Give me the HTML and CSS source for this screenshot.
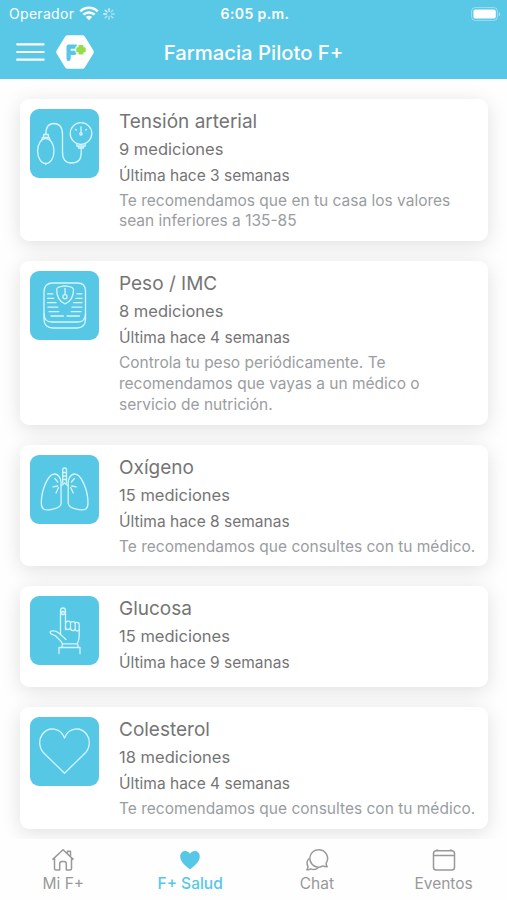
FILE: index.html
```html
<!DOCTYPE html>
<html lang="es">
<head>
    <meta charset="UTF-8">
    <meta name="viewport" content="width=device-width, initial-scale=1.0">
    <title>Farmacia Piloto F+</title>
    <link rel="stylesheet" href="styles.css">
</head>
<body>
<header>
    <div class="status">
        <div class="carrier">
            <span>Operador</span>
            <svg class="wifi" width="20" height="15" viewBox="0 0 20 15" fill="none" stroke="#fff" stroke-width="2.5">
                <path d="M1.3 5.4a12.4 12.4 0 0 1 17.4 0M4.4 8.7a8 8 0 0 1 11.2 0"/>
                <path d="M10 14.2L6.8 11a4.6 4.6 0 0 1 6.4 0z" fill="#fff" stroke="none"/>
            </svg>
            <svg class="spinner" width="12" height="12" viewBox="0 0 12 12" stroke="#fff" stroke-width="1.3" stroke-linecap="round">
                <path d="M6 .7v2.6M2.2 2.2l1.9 1.9M.7 6h2.6" opacity=".85"/>
                <path d="M2.2 9.8l1.9-1.9M6 11.3V8.7M9.8 9.8L7.9 7.9" opacity=".6"/>
                <path d="M11.3 6H8.7M9.8 2.2L7.9 4.1" opacity=".45"/>
            </svg>
        </div>
        <div class="time">6:05 p.m.</div>
        <svg class="battery" width="30" height="14" viewBox="0 0 30 14">
            <rect x=".6" y=".6" width="25.8" height="12.8" rx="3.6" fill="none" stroke="#fff" stroke-opacity=".4"/>
            <rect x="2.4" y="2.4" width="22.4" height="9.2" rx="2.2" fill="#fff"/>
            <path d="M27.8 5v4.4c1.6-.6 1.6-3.8 0-4.4z" fill="#fff" fill-opacity=".5"/>
        </svg>
    </div>
    <div class="navbar">
        <div class="left">
            <svg width="29" height="18" viewBox="0 0 29 18" stroke="#fff" stroke-width="2.2" stroke-linecap="round">
                <path d="M1.2 1.3h26.4M1.2 9h26.4M1.2 16.7h26.4"/>
            </svg>
            <svg class="logo" width="38" height="34" viewBox="0 0 38 34">
                <path d="M11.6.2h14.8q1.6 0 2.4 1.4l8.6 14q.7 1.4 0 2.8l-8.6 14q-.8 1.4-2.4 1.4H11.6q-1.6 0-2.4-1.4L.6 18.4q-.7-1.4 0-2.8l8.6-14Q10 .2 11.6.2z" fill="#fff"/>
                <path d="M12.6 23.9V11.6h7M12.6 17.8h6" fill="none" stroke="#56c8e6" stroke-width="4.2" stroke-linecap="round" stroke-linejoin="round"/>
                <path d="M23.3 11.1h3.400v2h2v3.400h-2v2h-3.400v-2h-2v-3.400h2z" fill="#93dd4b" stroke="#fff" stroke-width="4" stroke-linejoin="round"/>
                <path d="M23.400 11h3.200v2.200h2.200v3.200h-2.200v2.200h-3.200v-2.200h-2.200v-3.200h2.200z" fill="#93dd4b" stroke="#93dd4b" stroke-width="1.8" stroke-linejoin="round"/>
            </svg>
        </div>
        <h1>Farmacia Piloto F+</h1>
    </div>
</header>

<main>
    <section class="card">
        <svg class="icon" viewBox="0 0 69 69">
            <ellipse cx="15.8" cy="42" rx="8.2" ry="12.5"/>
            <path d="M11.4 31.500l1-3h6.800l1 3M13.700 28.500v-3h4.600v3M15.800 25.500C15.800 18 19 14.500 23.700 14.500c6.300 0 8.800 4.500 8.800 11V43c0 8 3.500 11 9 11 7 0 9.700-3.500 9.700-10v-6M15.800 54.500v1"/>
            <circle cx="51" cy="24.500" r="10.800"/>
            <path d="M46.800 34.500v2.500h8.400v-2.500M48.500 37v2h5v-2M51 18v5M45.500 20.500l.8.6M56.500 20.500l-.8.6"/>
            <circle cx="51" cy="24.800" r="1.200"/>
        </svg>
        <div class="info">
            <h2>Tensión arterial</h2>
            <p class="count">9 mediciones</p>
            <p class="last">Última hace 3 semanas</p>
            <p class="tip">Te recomendamos que en tu casa los valores<br>sean inferiores a 135-85</p>
        </div>
    </section>

    <section class="card">
        <svg class="icon" viewBox="0 0 69 69">
            <path d="M23 12h24.500q8 0 8 8v23q0 8-8 8H22q-8 0-8-8V21q0-9 9-9z"/>
            <path d="M14 43v5q0 9 9 9h24q8.500 0 8.500-9v-5"/>
            <path d="M28 16.500q6.800-3 14 0 1.500.8 1.500 2.200c0 7-2.600 11.700-8.500 14.300-5.600-2.600-8.300-7.300-8.300-14.300 0-1.400.3-1.800 1.300-2.200z"/>
            <path d="M35 17.500v6"/>
            <circle cx="35" cy="25.700" r="2.100"/>
            <path d="M17.500 22.800h5.300M17.500 27.300h6.200M17.500 31.700h8.500M18 36.200h9.800M19 40.600h9.800M21 45h12.500M52 22.800h-5.200M52 27.300h-6.200M52 31.700h-8.300M51.800 36.200h-9.800M51 40.600h-9.800M49.500 45H37"/>
        </svg>
        <div class="info">
            <h2>Peso / IMC</h2>
            <p class="count">8 mediciones</p>
            <p class="last">Última hace 4 semanas</p>
            <p class="tip">Controla tu peso periódicamente. Te<br>recomendamos que vayas a un médico o<br>servicio de nutrición.</p>
        </div>
    </section>

    <section class="card">
        <svg class="icon" viewBox="0 0 69 69">
            <path d="M32.700 28V14.500q0-1.500 1.900-1.500t1.900 1.500V28M32.700 17.500h3.800M32.700 21h3.800M32.700 24.500h3.800"/>
            <path d="M31 28.500c.5-4.500-2.500-9.500-6.500-9.500C18 19 11.300 35 11.300 48c0 6 2.700 7.700 9.200 6.700 5.500-.9 10.700-2.700 10.700-6.700z"/>
            <path d="M38.200 28.500c-.5-4.500 2.500-9.500 6.500-9.500C51.200 19 58 35 58 48c0 6-2.700 7.700-9.200 6.700-5.500-.9-10.600-2.700-10.600-6.700z"/>
            <path d="M31.500 30.500l3.100-2.500 3.100 2.500M28.500 32.500l-2.500 5.500M27.500 31l-4.500.8M27.800 27l-3-3.500M40.700 32.500l2.500 5.500M41.700 31l4.500.8M41.400 27l3-3.500"/>
        </svg>
        <div class="info">
            <h2>Oxígeno</h2>
            <p class="count">15 mediciones</p>
            <p class="last">Última hace 8 semanas</p>
            <p class="tip">Te recomendamos que consultes con tu médico.</p>
        </div>
    </section>

    <section class="card">
        <svg class="icon" viewBox="0 0 69 69">
            <path d="M30.500 38.500V14.700q0-2.700 2.500-2.700t2.500 2.700v19"/>
            <path d="M31.800 18.500v-3h2.400v3z"/>
            <path d="M35.500 28q0-2.800 2.500-2.800t2.500 1.500q0-1 2.200-1t2.300 1.300q.3-.8 2-.6 2.200.1 2.200 2v11.500q0 4.500-2 8H32.500c-1.500-4-4.500-5-6.700-7.900-1.800-1.400-5.600-1.500-5.600-3.600 0-2.300 5.500-2 8.300.3 3 2.300 5.500 5.200 7.500 6.800"/>
            <path d="M35.500 31q0 2.500 2.500 2.500t2.500-2v-5M40.500 32q.2 2.600 2.400 2.600t2.300-2.200v-5.200M45.200 33q.2 2 2 2t2-1.500"/>
            <path d="M32.500 47.900l-.7 3.600h16.500l-.7-3.600M29 57.500v-6h21v6"/>
        </svg>
        <div class="info">
            <h2>Glucosa</h2>
            <p class="count">15 mediciones</p>
            <p class="last">Última hace 9 semanas</p>
        </div>
    </section>

    <section class="card">
        <svg class="icon" viewBox="0 0 69 69">
            <path d="M34.500 56.200L14.300 36.500C9 31.200 8.300 23 12.200 17.500 18.400 9 30.500 10.500 34.500 21 38.500 10.500 50.600 9 56.800 17.500 60.700 23 60 31.200 54.700 36.500z"/>
        </svg>
        <div class="info">
            <h2>Colesterol</h2>
            <p class="count">18 mediciones</p>
            <p class="last">Última hace 4 semanas</p>
            <p class="tip">Te recomendamos que consultes con tu médico.</p>
        </div>
    </section>
</main>

<nav class="tabs">
    <a class="tab">
        <svg width="24" height="24" viewBox="0 0 24 24">
            <path d="M1.500 11.600L12 1.700l10.500 9.900M16.500 5.900V3.200h3v5.500M3.500 10v10.500q0 1.500 1.500 1.500h3.700v-6.200q0-2.300 2.300-2.300h2q2.300 0 2.300 2.300V22H19q1.500 0 1.500-1.500V10"/>
        </svg>
        <span>Mi F+</span>
    </a>
    <a class="tab active">
        <svg width="24" height="24" viewBox="0 0 24 24">
            <path d="M12 21.300C8.500 18.600 2.200 14 2.200 8.500c0-5.800 7-7.300 9.800-2.700 2.800-4.600 9.800-3.100 9.800 2.700 0 5.500-6.300 10.100-9.800 12.800z"/>
        </svg>
        <span>F+ Salud</span>
    </a>
    <a class="tab">
        <svg width="24" height="24" viewBox="0 0 24 24">
            <path d="M13.500 1.700a8.700 8.700 0 1 0 4.500 16.200q2 .9 4.200.8-1.100-1.500-1.100-3.500A8.700 8.700 0 0 0 13.500 1.700z"/>
            <path d="M4.200 10.500C1.500 12.500 1.500 16 3 18.200q.1 2-1.200 3.600 2.400.2 4.200-.9 4 1.700 7.200-1.200"/>
        </svg>
        <span>Chat</span>
    </a>
    <a class="tab">
        <svg width="24" height="24" viewBox="0 0 24 24">
            <rect x="1.500" y="2.800" width="21" height="19.200" rx="2.800"/>
            <path d="M1.500 7.500h21M5.200 1.200v1.600M18.800 1.200v1.600"/>
        </svg>
        <span>Eventos</span>
    </a>
</nav>
</body>
</html>
```

FILE: styles.css
```css
* {
    box-sizing: border-box;
}

body {
    display: flex;
    flex-direction: column;
    height: 900px;
    margin: 0;
    overflow: hidden;
    background-color: #fefefe;
    font-family: Inter, "Liberation Sans", sans-serif;
}

h1,
h2,
p {
    margin: 0;
    font-weight: normal;
    white-space: nowrap;
}

header {
    flex: none;
    height: 79px;
    background-color: #59c8e6;
    color: white;
}

.status {
    display: grid;
    grid-template-columns: 1fr auto 1fr;
    align-items: center;
    height: 27px;
    padding: 0 6px 0 9px;
    font-size: 14px;
}

.carrier {
    display: flex;
    align-items: center;
    letter-spacing: 0.3px;
}

.wifi {
    margin-left: 5px;
}

.spinner {
    margin-left: 4px;
}

.time {
    font-weight: 600;
    letter-spacing: 0.4px;
}

.battery {
    justify-self: end;
}

.navbar {
    display: grid;
    grid-template-columns: 1fr auto 1fr;
    align-items: center;
    height: 50px;
    padding: 0 16px;
}

.left {
    display: flex;
    align-items: center;
    gap: 11px;
}

h1 {
    font-size: 20.3px;
    font-weight: 500;
}

main {
    display: flex;
    flex: 1;
    flex-direction: column;
    gap: 20px;
    min-height: 0;
    padding: 19.6px 19px 0 20px;
    overflow: hidden;
}

.card {
    display: flex;
    flex: none;
    gap: 20px;
    padding: 10px 10px 9px;
    border-radius: 9px;
    background-color: white;
    box-shadow: 0 4px 20px rgba(0, 0, 0, 0.12);
}

.icon {
    flex: none;
    width: 69px;
    height: 69px;
    border-radius: 9px;
    background-color: #56c8e6;
    fill: none;
    stroke: #d5f5fd;
    stroke-width: 1.3;
    stroke-linecap: round;
    stroke-linejoin: round;
}

.info {
    color: #757575;
}

h2 {
    height: 27px;
    font-size: 19px;
    line-height: 25px;
}

.count {
    font-size: 16.5px;
    line-height: 27px;
}

.last {
    margin-bottom: 2px;
    font-size: 15.5px;
    line-height: 26px;
}

.tip {
    color: #9a9da1;
    font-size: 15.5px;
    line-height: 20.8px;
}

.tabs {
    display: grid;
    flex: none;
    grid-template-columns: repeat(4, 1fr);
    height: 61px;
    background-color: #fefefe;
}

.tab {
    display: flex;
    flex-direction: column;
    align-items: center;
    gap: 1.5px;
    padding-top: 9px;
    color: #999;
    font-size: 15.5px;
    line-height: 20px;
}

.tab svg {
    fill: none;
    stroke: currentColor;
    stroke-width: 1.5;
    stroke-linejoin: round;
}

.active {
    color: #56c8e6;
    font-weight: 500;
}

.active svg {
    fill: currentColor;
    stroke: none;
}
```
